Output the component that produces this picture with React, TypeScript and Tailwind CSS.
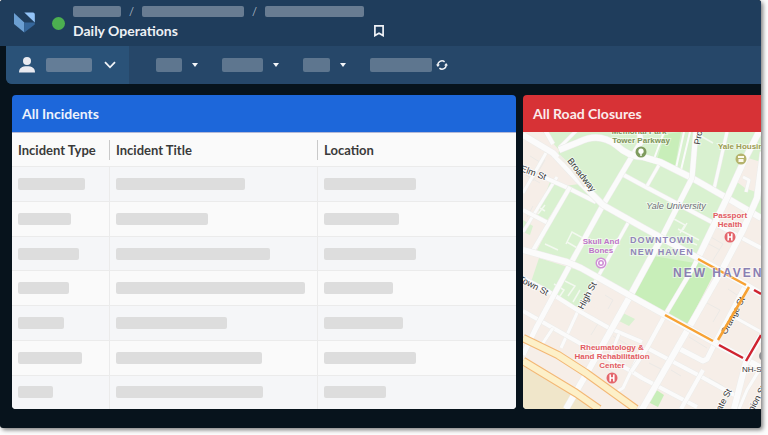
import React from "react";

const crumbs = [48, 102, 99];

const filters = [
  { name: "Status", width: 26 },
  { name: "Category", width: 41 },
  { name: "Area", width: 27 },
];

const columns = ["Incident Type", "Incident Title", "Location"];

// placeholder widths for every cell
const incidents = [
  [67, 129, 92],
  [53, 92, 75],
  [61, 154, 92],
  [51, 189, 69],
  [46, 111, 79],
  [64, 146, 92],
  [35, 147, 62],
];

const Logo = () => (
  <svg width="22" height="21" viewBox="0 0 22 21" aria-hidden="true">
    <path d="M0 1 L10.3 10.5 V20.5 L0 12 Z" fill="#6b9fd2" />
    <path d="M10.3 10.5 H20.8 V12.5 L10.3 20.5 Z" fill="#35669a" />
    <path d="M10.3 0.4 H19 Q20.8 0.4 20.8 2.4 V10.4 Z" fill="#93c4f8" />
  </svg>
);

const UserIcon = () => (
  <svg width="16" height="16" viewBox="0 0 16 16" fill="#e9eaf0" aria-hidden="true">
    <circle cx="8" cy="4" r="4" />
    <path d="M0 15.5 C0 11 3 9.3 8 9.3 S16 11 16 15.5 Z" />
  </svg>
);

const Chevron = () => (
  <svg width="12" height="8" viewBox="0 0 12 8" fill="none" stroke="#f1f3f7" strokeWidth="1.8" aria-hidden="true">
    <path d="M1 1.2 L6 6.3 L11 1.2" />
  </svg>
);

const Caret = () => (
  <svg width="6" height="4" viewBox="0 0 6 4" aria-hidden="true">
    <path d="M0 0 H6 L3 4 Z" fill="#f4f6f9" />
  </svg>
);

const RefreshIcon = () => (
  <svg width="12" height="12" viewBox="0 0 12 12" fill="none" stroke="#f1f3f7" strokeWidth="1.5" aria-hidden="true">
    <path d="M1.9 6.4 A4.1 4.1 0 0 1 8.6 2.8" />
    <path d="M10.1 5.6 A4.1 4.1 0 0 1 3.4 9.2" />
    <path d="M0 5.4 H3.9 L1.9 8 Z" fill="#f1f3f7" stroke="none" />
    <path d="M8.1 6.6 H12 L10.1 4 Z" fill="#f1f3f7" stroke="none" />
  </svg>
);

const BookmarkIcon = () => (
  <svg width="10" height="12" viewBox="0 0 10 12" fill="none" stroke="#f1f3f7" strokeWidth="1.7" aria-hidden="true">
    <path d="M0.9 0.9 H9.1 V10.6 L5 8.3 L0.9 10.6 Z" />
  </svg>
);

const Road: React.FC<{ d: string; w?: number }> = ({ d, w = 5 }) => (
  <>
    <path d={d} stroke="#ececea" strokeWidth={w + 1} />
    <path d={d} stroke="#fbfbfb" strokeWidth={w} />
  </>
);

const Highway: React.FC<{ d: string }> = ({ d }) => (
  <>
    <path d={d} stroke="#f3b876" strokeWidth="8.5" />
    <path d={d} stroke="#fdf0c8" strokeWidth="6.3" />
  </>
);

const Hospital: React.FC<{ x: number; y: number }> = ({ x, y }) => (
  <g transform={`translate(${x} ${y})`}>
    <circle r="5.5" fill="#e4666c" />
    <path d="M-1.8 -3.6 V3.6 M1.8 -3.6 V3.6 M-1.8 0 H1.8" stroke="#ffffff" strokeWidth="1.5" />
  </g>
);

const ClosureMap = () => (
  <svg
    className="block h-full w-full bg-[#f6eee8] font-['Liberation_Sans',sans-serif]"
    viewBox="0 0 238 277"
    preserveAspectRatio="xMidYMid slice"
    role="img"
    aria-label="Road closures in New Haven"
  >
    {/* campus and parks */}
    <g fill="#d9f1d0">
      <path d="M32 45 L80 73 L108 26 L140 30 L238 86 V0 H20 L36 18 Z" />
      <path d="M30 46 L82 72 L175 126 L204 66 L238 85 V0 H238 L140 20 L108 20 L80 70 L36 44 Z" />
      <path d="M28 47 L44 57 L22 92 L14 84 Z" />
      <path d="M45 58 L80 73 L139 106 L175 126 L170 136 L119 170 L50 132 L12 122 Z" />
      <path d="M16 126 L48 136 L34 163 L8 150 Z" />
      <path d="M48 136 L76 143 L57 178 L28 163 Z" />
      <path d="M0 88 L10 94 L7 103 L0 100 Z" />
      <path d="M100 181 L112 187 L106 194 L96 189 Z" />
      <path d="M50 265 L66 274 L64 277 H44 Z" />
    </g>
    <g fill="#c8eeb9">
      <path d="M139 105 L196 132 L164 194 L106 163 Z" />
      <path d="M132 257 L141 263 L135 275 L125 270 Z" />
      <path d="M142 2 L158 0 L152 34 L134 28 Z" />
    </g>
    <path d="M139 105 L175 126 L172 131 L124 123 L130 112 Z" fill="#d9f1d0" />
    <g fill="#f6eee8">
      <path d="M204 86 L221 98 L200 138 L177 126 Z" />
      <path d="M225 26 L238 30 V62 L222 56 L214 50 Z" />
      <path d="M238 88 L221 98 L202 138 L238 160 Z" />
      <path d="M0 0 H8 L36 26 L57 52 L40 54 L20 45 L0 72 Z" />
      <path d="M200 132 L223 153 L192 210 L166 196 Z" />
      <path d="M78 146 L106 166 L96 184 L60 172 Z" />
    </g>
    <path d="M0 234 L76 277 H0 Z" fill="#f0e6ca" />

    {/* small paths */}
    <g fill="none" stroke="#f3f9f0" strokeWidth="1.5">
      <path d="M22 73 L15 82 M17 76 L22 79 M22 112 L35 118 M43 112 L49 100 L60 106 L56 113" />
      <path d="M44 110 L56 117 M151 87 L162 93 L157 101 M155 97 L176 108 M158 106 L174 113 M164 91 L160 98" />
      <path d="M31 152 L41 158 L35 167 M42 149 L52 154 L45 164 M57 158 L50 170" />
      <path d="M176 3 L190 11" />
    </g>
    <g fill="none" stroke="#fbfbfb" strokeWidth="2">
      <path d="M141 0 L131 27 M161 0 L153 36 M167 0 L158 38" />
    </g>
    <g fill="none" stroke="#ebe9e6" strokeWidth="1">
      <path d="M7 24 L20 32 M22 28 L10 49 M3 43 L17 51 M10 74 L4 85 M67 184 L76 190 L68 203 M82 163 L90 168 L85 177 M90 204 L105 213" />
      <path d="M10 206 L22 213 M29 223 L39 229 M76 232 L93 242 M91 246 L80 256 M126 231 L138 237 L133 247 M148 238 L158 244 M186 246 L200 254" />
      <path d="M186 104 L200 112 L190 128 M184 111 L197 118 M205 157 L214 163 M184 171 L197 178 L190 190 M166 205 L184 216 M224 110 L234 116" />
    </g>

    {/* streets */}
    <g fill="none" strokeLinejoin="round">
      <Road w={3} d="M23 21 L0 61" />
      <Road w={3} d="M34 45 L0 100" />
      <Road w={4} d="M16 43 L45 56 L73 70" />
      <Road w={4} d="M0 78 L27 92" />
      <Road w={4} d="M47 55 L25 93 L8 122" />
      <Road w={4} d="M99 42 L121 54 L202 97 L238 116" />
      <Road w={3} d="M136 33 L124 54" />
      <Road w={3} d="M204 0 L191 57" />
      <Road w={3} d="M220 45 L226 48 L223 60" />
      <Road w={3} d="M36 16 L54 -2" />
      <Road w={3} d="M105 91 L76 143 L55 179 L38 216" />
      <Road w={4} d="M0 146 L26 160 L56 179 L86 196 L119 210" />
      <Road w={4} d="M0 179 L30 196 L60 213 L108 239 L119 246 L174 275" />
      <Road w={3} d="M30 196 L18 214" />
      <Road w={3} d="M96 202 L88 222 M119 216 L100 256 L90 262" />
      <Road w={4} d="M124 216 L177 244 L213 264" />
      <Road w={4} d="M108 240 L124 216 L142 183 L170 136 L175 126" />
      <Road w={5} d="M155 216 L180 229 L184 227 L192 211" />
      <Road w={4} d="M180 238 L158 277" />
      <Road w={3} d="M213 186 L238 200" />
      <Road w={3} d="M238 235 L224 258 L216 277" />
      <Road w={5} d="M116 -2 L118 10 L108 26 L80 73 L48 131 L13 196 L0 223" />
      <Road w={6} d="M36 18 L56 10 Q76 0 93 13 Q106 25 120 25 L137 30 L169 46 L204 66 L238 86" />
      <Road w={5} d="M173 -2 L169 46 L139 105" />
      <Road w={6} d="M139 105 L106 166 L65 239 L43 277" />
      <Road w={6} d="M240 -8 L220 31 L204 66 L175 126" />
      <Road w={6} d="M240 20 L234 66 L220 98 L200 136 L164 199 L117 281" />
      <Road w={6} d="M0 118 L44 130 L58 136 L106 163 L142 183 L192 211 L224 228 L238 236" />
      <Road w={5} d="M223 153 L192 211" />
      <Road w={6} d="M238 204 L223 230 L211 277" />
      <Road w={6} d="M0 3 L30 21 L55 48 L80 73 L119 95 L175 126 L223 153 L238 162" />
      <Road w={4} d="M30 12 L22 -2" />
      <path d="M36 24 Q48 34 62 55" stroke="#f0ede6" strokeWidth="3" />
      <Highway d="M0 206 L35 223 L63 241 L113 277" />
      <Highway d="M0 229 L53 261 L76 277" />
    </g>

    {/* street names */}
    <g fontSize="9" fill="#36373a" stroke="#ffffff" strokeWidth="2" strokeOpacity="0.6" paintOrder="stroke">
      <text transform="translate(-3 39) rotate(20)">Elm St</text>
      <text transform="translate(44 29) rotate(52)">Broadway</text>
      <text transform="translate(177 13) rotate(-80)">Pro</text>
      <text transform="translate(-5 149) rotate(27)">Town St</text>
      <text transform="translate(60 178) rotate(-62)">High St</text>
      <text transform="translate(203 203) rotate(-62)">Orange St</text>
      <text transform="translate(194 287) rotate(-62)">State St</text>
      <text transform="translate(227 286) rotate(-62)">Union St</text>
      <text x="219" y="240" fontSize="8">NH-State</text>
    </g>

    {/* closures */}
    <g fill="none" strokeWidth="2.5">
      <path d="M175 127 L223 153 M226 155 L195 208 M142 183 L190 209" stroke="#f7a234" />
      <path d="M196 213 L220 226 M223 229 L238 203 M231 158 L238 162" stroke="#cf2330" />
    </g>
    <circle cx="241" cy="224" r="5" fill="#8f8f93" />

    {/* places */}
    <g fontSize="8" fontWeight="700" textAnchor="middle" stroke="#ffffff" strokeWidth="2" strokeOpacity="0.5" paintOrder="stroke">
      <g fill="#7f9359">
        <text x="116" y="2">Memorial Park</text>
        <text x="118" y="11">Tower Parkway</text>
      </g>
      <text x="220" y="17" fill="#9c9c52">Yale Housing</text>
      <text x="153" y="77" fill="#6f6f7a" fontSize="9" fontWeight="400" fontStyle="italic">
        Yale University
      </text>
      <g fill="#bd74c8">
        <text x="78" y="112">Skull And</text>
        <text x="78" y="121">Bones</text>
      </g>
      <g fill="#e25a61">
        <text x="207" y="86">Passport</text>
        <text x="207" y="95">Health</text>
        <text x="89" y="218">Rheumatology &amp;</text>
        <text x="89" y="227">Hand Rehabilitation</text>
        <text x="89" y="236">Center</text>
      </g>
      <g fill="#9086b8" fontSize="9" letterSpacing="1">
        <text x="139" y="111">DOWNTOWN</text>
        <text x="139" y="123">NEW HAVEN</text>
      </g>
      <text x="150" y="145" fill="#8a80b2" fontSize="12" letterSpacing="2" textAnchor="start">
        NEW HAVEN
      </text>
    </g>

    <Hospital x={207} y={105} />
    <Hospital x={89} y={246} />
    <g transform="translate(118 20)">
      <circle r="5.5" fill="#7f9b5f" />
      <circle cy="-0.8" r="2.6" fill="#ffffff" />
      <path d="M0 0 V4" stroke="#ffffff" strokeWidth="1.4" />
    </g>
    <g transform="translate(218 27)">
      <circle r="5.5" fill="#b5b36d" />
      <path d="M-3 -3 H3 V-1 H-3 Z M-2.5 0 H2.5 V3 H-2.5 Z" fill="#fbfaec" />
    </g>
    <g transform="translate(78 131)">
      <circle r="5.5" fill="#cf8fd6" />
      <circle r="3.6" fill="none" stroke="#ffffff" strokeWidth="1" />
      <circle r="1.4" fill="#ffffff" />
    </g>
  </svg>
);

const Header = () => (
  <header className="flex h-[46px] items-start bg-[#1f3d5c] pl-3.5">
    <a href="#" aria-label="Home" className="pt-3">
      <Logo />
    </a>
    <span className="mt-[17px] ml-4 size-[13px] rounded-full bg-[#4caf50]" />
    <div className="ml-2 w-[311px] pt-1.5">
      <nav aria-label="Breadcrumb" className="flex h-[11px] items-center">
        {crumbs.map((width, i) => (
          <React.Fragment key={i}>
            {i > 0 && <span className="w-[21px] text-center text-[11px] leading-none text-[#a9b5c3]">/</span>}
            <span className="h-[11px] rounded-xs bg-[#687c92]" style={{ width }} />
          </React.Fragment>
        ))}
      </nav>
      <div className="mt-1 flex items-center justify-between">
        <h1 className="text-[14px] leading-5 font-bold text-[#eef1f5]">Daily Operations</h1>
        <button type="button" aria-label="Bookmark">
          <BookmarkIcon />
        </button>
      </div>
    </div>
  </header>
);

const Toolbar = () => (
  <div className="ml-1.5 flex h-[38px] overflow-hidden rounded-bl-md bg-[#264769]">
    <button type="button" aria-label="Account" className="flex w-[123px] items-center bg-[#2a5278] pl-[13px]">
      <UserIcon />
      <span className="ml-[11px] h-3.5 w-[46px] rounded-xs bg-[#647d97]" />
      <span className="ml-3">
        <Chevron />
      </span>
    </button>
    <div className="flex items-center gap-6 pl-[27px]">
      {filters.map((filter) => (
        <button key={filter.name} type="button" aria-label={filter.name} className="flex items-center gap-2.5">
          <span className="h-3.5 rounded-xs bg-[#5e768f]" style={{ width: filter.width }} />
          <Caret />
        </button>
      ))}
      <button type="button" aria-label="Refresh" className="flex items-center gap-1">
        <span className="h-3.5 w-[62px] rounded-xs bg-[#5e768f]" />
        <RefreshIcon />
      </button>
    </div>
  </div>
);

const IncidentTable = () => (
  <table className="h-[277px] w-full table-fixed border-collapse bg-[#fafafa]">
    <colgroup>
      <col className="w-[98px]" />
      <col className="w-[208px]" />
      <col />
    </colgroup>
    <thead>
      <tr className="h-[34px] border-t border-[#b4b9d6]">
        {columns.map((column) => (
          <th key={column} scope="col" className="group p-0 text-left">
            <div className="flex h-5 items-center justify-between pl-1.5 text-[13px] leading-5 font-bold text-[#3a3a3a]">
              {column}
              <span className="h-5 w-px bg-[#c9c9c9] group-last:hidden" />
            </div>
          </th>
        ))}
      </tr>
    </thead>
    <tbody>
      {incidents.map((row, i) => (
        <tr key={i} className="border-t border-[#ebebeb] odd:bg-[#f5f6f8]">
          {row.map((width, j) => (
            <td key={j} className="p-0 pl-1.5 shadow-[inset_-1px_0_0_#ebebeb] last:shadow-none">
              <div className="h-3 rounded-xs bg-[#dddddd]" style={{ width }} />
            </td>
          ))}
        </tr>
      ))}
    </tbody>
  </table>
);

export default function App() {
  return (
    <div className="bg-[#fdfdfd] pr-[7px] pb-[7px] font-[Lato,sans-serif]">
      <div className="overflow-hidden rounded-[3px] bg-[#07131c] shadow-[2px_2px_4px_rgba(0,0,0,0.5)]">
        <Header />
        <Toolbar />
        <main className="grid grid-cols-[504fr_238fr] gap-[7px] pt-[11px] pb-[19px] pl-3">
          <section className="overflow-hidden rounded-[4px]">
            <h2 className="bg-[#1d67da] px-2.5 py-2 text-[14px] leading-[21px] font-bold text-[#eef3fc]">
              All Incidents
            </h2>
            <IncidentTable />
          </section>
          <section className="flex flex-col overflow-hidden rounded-l-[4px]">
            <h2 className="bg-[#d73236] px-2.5 py-2 text-[14px] leading-[21px] font-bold text-[#fbecec]">
              All Road Closures
            </h2>
            <div className="h-[277px]">
              <ClosureMap />
            </div>
          </section>
        </main>
      </div>
    </div>
  );
}
